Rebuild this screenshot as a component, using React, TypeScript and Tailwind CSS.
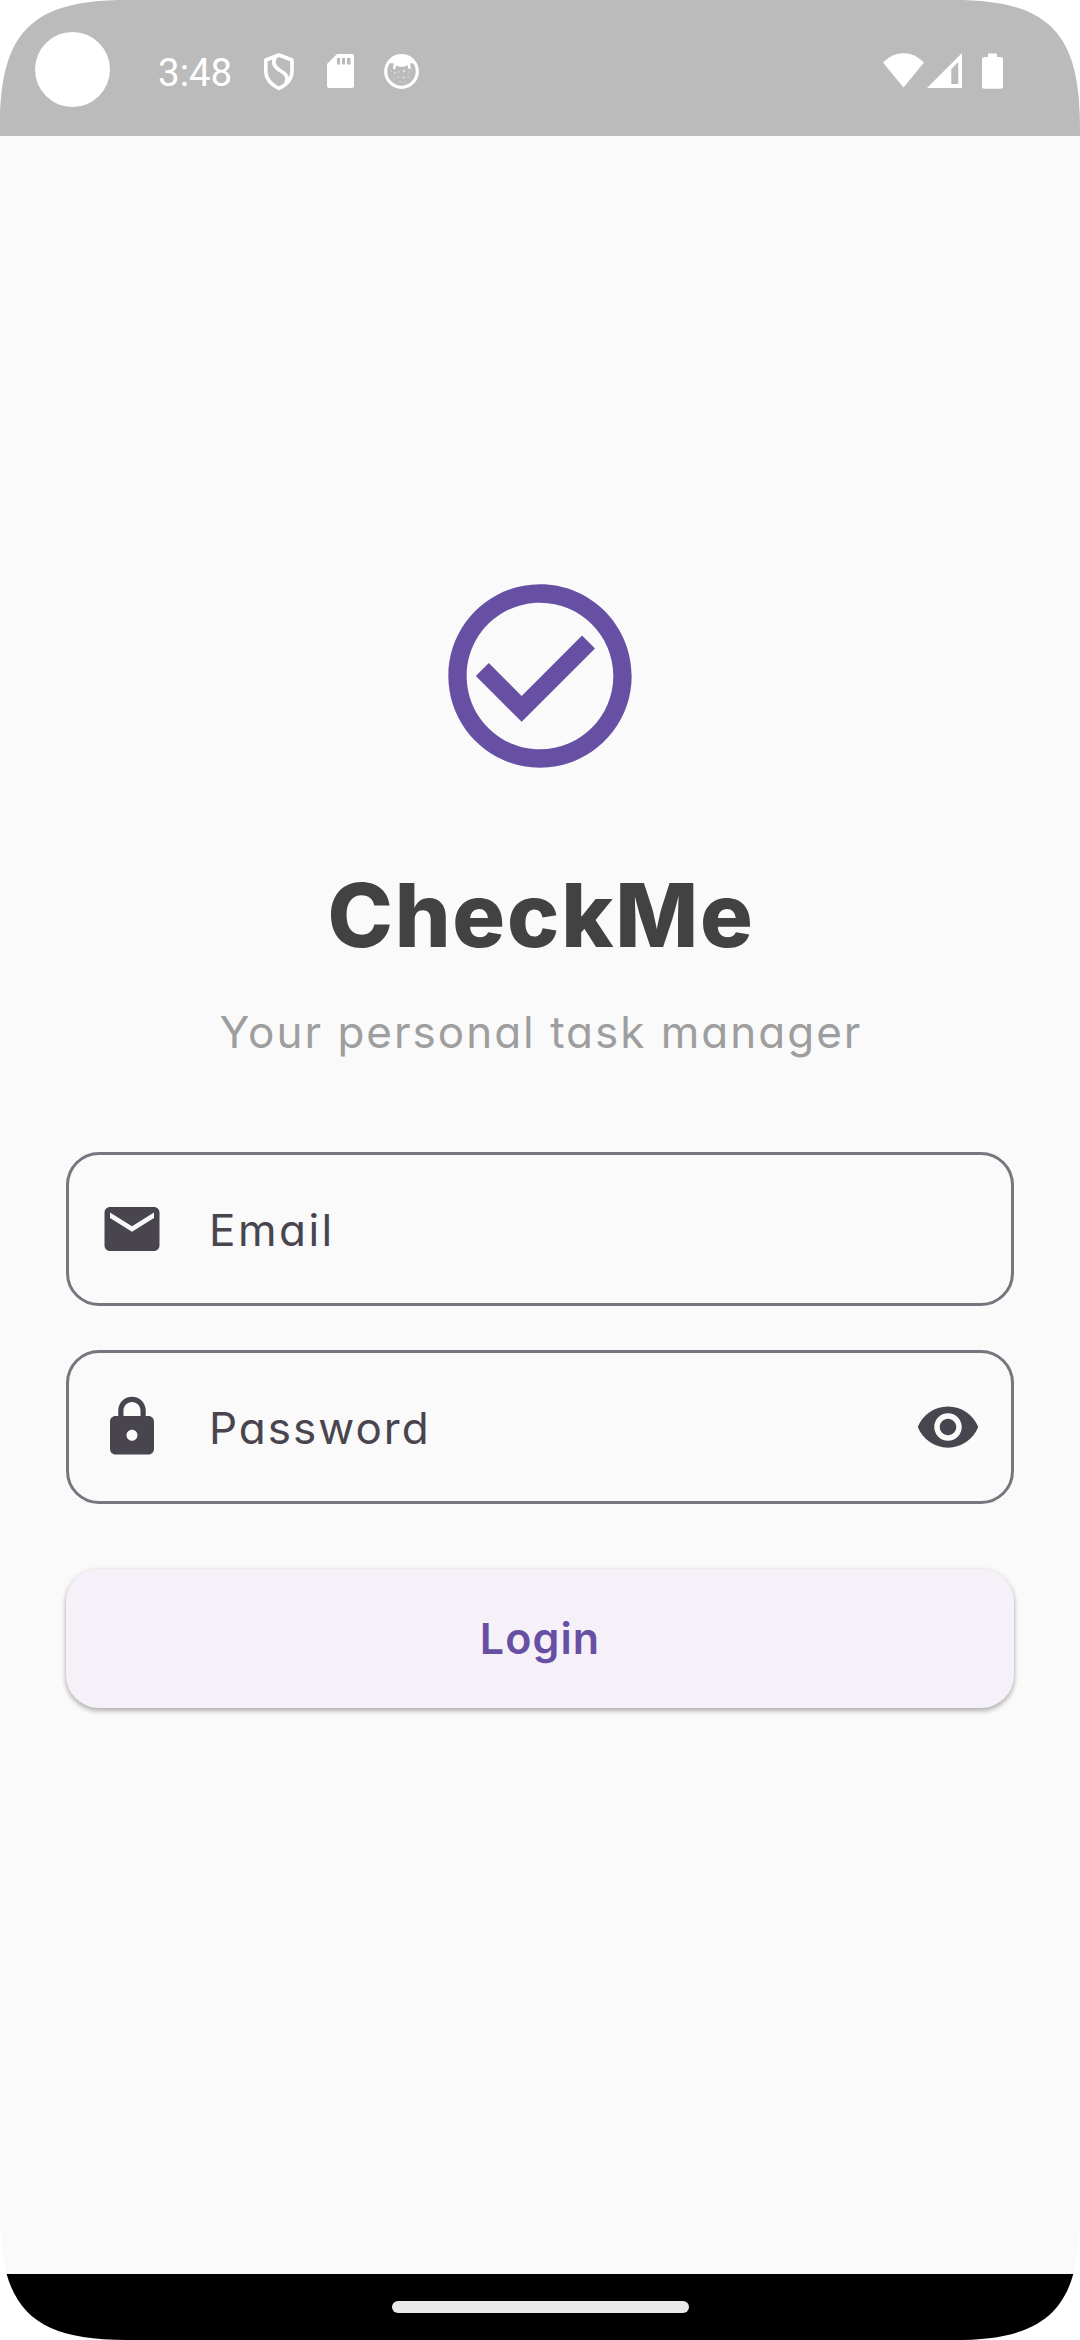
import React from "react";

const ui = "font-['Inter','Liberation_Sans',sans-serif] [font-feature-settings:'cv11','ss03']";

function StatusBar() {
  return (
    <header className="flex h-[136px] shrink-0 items-start bg-[#bbbbbb] text-white">
      <div className="mt-8 ml-[35px] size-[75px] rounded-full bg-white" />
      <span className="mt-[50px] ml-[48px] w-[74px] font-['Roboto',sans-serif] text-[38.5px] leading-[46px]">3:48</span>
      <svg className="mt-[52px] ml-[31px] h-[39px] w-8" viewBox="0 0 32 39" fill="none" stroke="currentColor" strokeWidth="3.6" strokeLinejoin="round">
        <path d="M16 3 29 8V19C29 27 23 33 16 36.5C9 33 2.800 27 2.800 19V8Z" />
        <path d="M12.500 4.500C9.500 10 11 15 17 18.500C24 22 25.500 26 23 31" />
      </svg>
      <svg className="mt-[54px] ml-8 h-[34px] w-[27px]" viewBox="0 0 27 34">
        <path d="M10 0H24.500Q27 0 27 2.500V31.500Q27 34 24.500 34H2.500Q0 34 0 31.500V10Z" fill="currentColor" />
        <path d="M10 4h3v6.500h-3zM15 4h3v6.500h-3zM20 4h3.500v6.500h-3.500z" fill="#bbbbbb" />
      </svg>
      <svg className="mt-[54px] ml-[30px] size-[35px]" viewBox="0 0 35 35">
        <circle cx="17.500" cy="17.500" r="15.800" fill="none" stroke="currentColor" strokeWidth="3.200" />
        <path d="M5 9Q10 2 17.500 2T30 9L26 9.500 27 14Q25 16 24 14L23.500 11Q17.500 14.500 12.500 11.500L11 15Q9 16 9 13.500L10 9.500Z" fill="currentColor" />
        <g fill="currentColor" opacity=".6">
          <circle cx="20" cy="17" r="1.200" /><circle cx="11" cy="19" r="1" /><circle cx="15" cy="18" r=".7" />
          <circle cx="25" cy="18" r=".7" /><circle cx="7.500" cy="17" r=".6" /><circle cx="14" cy="23" r=".8" />
          <circle cx="19.500" cy="23.500" r="1.100" /><circle cx="24.500" cy="23" r=".8" /><circle cx="10" cy="24" r=".6" />
          <circle cx="16" cy="27.500" r=".7" /><circle cx="21" cy="28" r=".6" /><circle cx="28" cy="15" r=".6" />
        </g>
      </svg>
      <svg className="mt-[53px] ml-auto h-[35px] w-[41px]" viewBox="0 0 41 35" fill="currentColor">
        <path d="M0 9.500Q9 .3 20.500 .3T41 9.500L20.500 34.500Z" />
      </svg>
      <svg className="mt-[53px] ml-[3px] h-[35px] w-[35px]" viewBox="0 0 35 35" fill="currentColor">
        <path fillRule="evenodd" d="M35 0V35H0ZM31.300 9 24.300 16V31H31.300Z" />
      </svg>
      <svg className="mt-[53px] mr-[77px] ml-5 h-9 w-[21px]" viewBox="0 0 21 36" fill="currentColor">
        <path d="M6 .5H15V4H18.500Q21 4 21 6.500V33.300Q21 35.800 18.500 35.800H2.500Q0 35.800 0 33.300V6.500Q0 4 2.500 4H6Z" />
      </svg>
    </header>
  );
}

function Field({ icon, label, labelClass, trailing }: { icon: string; label: string; labelClass: string; trailing?: string }) {
  return (
    <div className="flex h-[154px] items-center rounded-[33px] border-[3px] border-[#79747e] px-[30px] text-[#49454f]">
      <svg className="size-[66px] shrink-0" viewBox="0 0 24 24" fill="currentColor"><path d={icon} /></svg>
      <span className={`ml-[44px] flex-1 pt-[2px] text-[44px] leading-[60px] ${labelClass}`}>{label}</span>
      {trailing && <svg className="size-[66px] shrink-0" viewBox="0 0 24 24" fill="currentColor"><path d={trailing} /></svg>}
    </div>
  );
}

const MAIL = "M20 4H4c-1.100 0-1.990.9-1.990 2L2 18c0 1.100.9 2 2 2h16c1.100 0 2-.9 2-2V6c0-1.100-.9-2-2-2zm0 4l-8 5-8-5V6l8 5 8-5v2z";
const LOCK = "M18 8h-1V6c0-2.760-2.240-5-5-5S7 3.240 7 6v2H6c-1.100 0-2 .9-2 2v10c0 1.100.9 2 2 2h12c1.100 0 2-.9 2-2V10c0-1.100-.9-2-2-2zm-6 9c-1.100 0-2-.9-2-2s.9-2 2-2 2 .9 2 2-.9 2-2 2zm3.100-9H8.900V6c0-1.710 1.390-3.100 3.100-3.100 1.710 0 3.100 1.390 3.100 3.100v2z";
const EYE = "M12 4.500C7 4.500 2.730 7.610 1 12c1.730 4.390 6 7.500 11 7.500s9.270-3.110 11-7.500c-1.730-4.390-6-7.500-11-7.500zM12 17c-2.760 0-5-2.240-5-5s2.240-5 5-5 5 2.240 5 5-2.240 5-5 5zm0-8c-1.660 0-3 1.340-3 3s1.340 3 3 3 3-1.340 3-3-1.340-3-3-3z";

function ScreenCorner({ place }: { place: string }) {
  return (
    <svg className={`absolute size-[126px] ${place}`} viewBox="0 0 126 126">
      <path d="M-1 -1H126V0C32 0 0 32 0 126H-1Z" fill="#ffffff" />
    </svg>
  );
}

export default function App() {
  return (
    <div className={`relative flex h-[2340px] w-[1080px] flex-col overflow-hidden bg-[#fafafa] ${ui}`}>
      <StatusBar />
      <main className="flex flex-1 flex-col px-[66px] pt-[430px]">
        <svg className="size-[220px] self-center text-[#6750a4]" viewBox="0 0 24 24" fill="currentColor">
          <path d="M16.590 7.580L10 14.170l-3.590-3.580L5 12l5 5 8-8zM12 2C6.480 2 2 6.480 2 12s4.480 10 10 10 10-4.480 10-10S17.520 2 12 2zm0 18c-4.420 0-8-3.580-8-8s3.580-8 8-8 8 3.580 8 8-3.580 8-8 8z" />
        </svg>
        <h1 className="mt-[66px] pl-[2px] text-center text-[88px] leading-[126px] font-extrabold tracking-[1.800px] whitespace-nowrap text-[#424242]">CheckMe</h1>
        <p className="mt-[21px] pl-[2px] text-center text-[44px] leading-[66px] tracking-[2px] whitespace-nowrap text-[#9e9e9e]">Your personal task manager</p>
        <form className="mt-[87px] flex flex-col">
          <Field icon={MAIL} label="Email" labelClass="tracking-[2.500px]" />
          <div className="h-11" />
          <Field icon={LOCK} label="Password" labelClass="tracking-[2px]" trailing={EYE} />
          <button type="button" className="mt-[65px] h-[139px] rounded-[33px] bg-[#f6f1f9] pb-[1px] text-[43px] leading-[60px] font-semibold tracking-[1.100px] text-[#6750a4] shadow-[0_3px_5px_rgba(0,0,0,0.25),0_1px_6px_rgba(0,0,0,0.1)]">Login</button>
        </form>
      </main>
      <footer className="flex h-[66px] shrink-0 justify-center bg-black pt-[27px]">
        <div className="h-3 w-[297px] rounded-full bg-[#e9e9e9]" />
      </footer>
      <ScreenCorner place="top-0 left-0" />
      <ScreenCorner place="top-0 right-0 -scale-x-100" />
      <ScreenCorner place="bottom-0 left-0 -scale-y-100" />
      <ScreenCorner place="right-0 bottom-0 rotate-180" />
    </div>
  );
}
